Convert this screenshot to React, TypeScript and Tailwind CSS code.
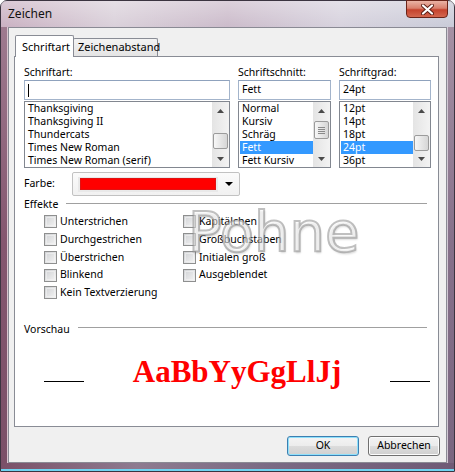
import React from "react";

const UI = "font-['Segoe_UI','Noto_Sans',sans-serif] text-[10.5px] text-black";

function Tri({ dir }: { dir: "up" | "down" }) {
  return (
    <svg width="7" height="4" viewBox="0 0 7 4">
      {dir === "up" ? (
        <polygon points="3.5,0 7,4 0,4" fill="#4a4a4a" />
      ) : (
        <polygon points="0,0 7,0 3.5,4" fill="#4a4a4a" />
      )}
    </svg>
  );
}

function ScrollBar({ thumbClass, grip }: { thumbClass: string; grip?: boolean }) {
  return (
    <div className="relative w-[17px] h-full bg-[linear-gradient(90deg,#e4e4e4,#f3f3f3)] shrink-0">
      <div className="absolute top-[7px] left-0 w-full flex justify-center">
        <Tri dir="up" />
      </div>
      <div
        className={`absolute left-[1px] w-[15px] rounded-[2px] border border-[#9b9b9b] bg-[linear-gradient(90deg,#f7f7f7,#e6e6e6_50%,#d6d6d6)] flex flex-col items-center justify-center gap-[1px] ${thumbClass}`}
      >
        {grip && (
          <>
            <div className="w-[7px] h-px bg-[#8a8a8a]" />
            <div className="w-[7px] h-px bg-[#8a8a8a]" />
            <div className="w-[7px] h-px bg-[#8a8a8a]" />
            <div className="w-[7px] h-px bg-[#8a8a8a]" />
          </>
        )}
      </div>
      <div className="absolute bottom-[6px] left-0 w-full flex justify-center">
        <Tri dir="down" />
      </div>
    </div>
  );
}

function ListBox({
  items,
  selected,
  thumbClass,
  grip,
}: {
  items: string[];
  selected?: number;
  thumbClass: string;
  grip?: boolean;
}) {
  return (
    <div className="mt-[1px] h-[67px] border border-[#828790] bg-white flex">
      <div className="flex-1 overflow-hidden pl-[1px]">
        {items.map((t, i) => (
          <div
            key={t}
            className={`h-[13px] leading-[13px] pl-[2px] whitespace-nowrap ${
              i === selected ? "bg-[#3399ff] text-white" : ""
            }`}
          >
            {t}
          </div>
        ))}
      </div>
      <ScrollBar thumbClass={thumbClass} grip={grip} />
    </div>
  );
}

function TextBox({ value, caret }: { value?: string; caret?: boolean }) {
  return (
    <div className="h-[20px] border border-[#a3b4cb] border-t-[#8fa2bd] bg-white flex items-center pl-[3px]">
      {caret ? <div className="w-px h-[13px] bg-black" /> : <span>{value}</span>}
    </div>
  );
}

function Check({ label }: { label: string }) {
  return (
    <div className="h-[17.75px] flex items-center gap-[3px]">
      <div className="w-[13px] h-[13px] border border-[#8e8f8f] bg-[linear-gradient(135deg,#cfd1d4,#f4f4f4)] p-px">
        <div className="w-full h-full border border-[#f4f4f4]/60" />
      </div>
      <span className="whitespace-nowrap">{label}</span>
    </div>
  );
}

function Button({ label, primary }: { label: string; primary?: boolean }) {
  return (
    <div
      className={`w-[72px] h-[20px] rounded-[3px] border flex items-center justify-center ${
        primary
          ? "border-[#3c7fb1] shadow-[inset_0_0_0_1px_#8fe0fb] bg-[linear-gradient(180deg,#f4f4f4_0%,#ececec_50%,#dcdcdc_50%,#d0d0d0_100%)]"
          : "border-[#707070] shadow-[inset_0_0_0_1px_#fcfcfc] bg-[linear-gradient(180deg,#f2f2f2_0%,#ebebeb_50%,#dddddd_50%,#cfcfcf_100%)]"
      }`}
    >
      {label}
    </div>
  );
}

export default function App() {
  return (
    <div className={`w-[455px] h-[472px] relative overflow-hidden ${UI}`}>
      <div className="absolute inset-0 rounded-t-[7px] border border-[#3b3440] bg-[linear-gradient(90deg,#c7adbf_0%,#d8ced8_25%,#c9b8c8_50%,#d5d0dc_75%,#c6c8d6_100%)] flex flex-col">
        {/* Title bar */}
        <div className="h-[26px] flex items-start relative bg-[linear-gradient(180deg,rgba(255,255,255,0.35),rgba(255,255,255,0.05))]">
          <span className="ml-[7px] mt-[5px] text-[12px] leading-[16px] text-[#111]">Zeichen</span>
          <div className="absolute right-[6px] top-[-1px] w-[42px] h-[18px] rounded-b-[4px] border border-[#6a2419] bg-[linear-gradient(180deg,#eab3a5_0%,#d9806d_45%,#c5432d_55%,#d4674f_100%)] flex items-center justify-center">
            <svg width="13" height="11" viewBox="0 0 13 11">
              <path d="M2 1.5 L11 9.5 M11 1.5 L2 9.5" stroke="#5a1d14" strokeWidth="4" strokeLinecap="round" />
              <path d="M2 1.5 L11 9.5 M11 1.5 L2 9.5" stroke="#ffffff" strokeWidth="2.2" strokeLinecap="round" />
            </svg>
          </div>
        </div>
        {/* Body */}
        <div className="flex h-[436px]">
          <div className="w-[7px] bg-[linear-gradient(180deg,#9e7a8f,#84566f_50%,#7b5068)] border-r border-[#d8c6cf]" />
          <div className="w-[439px] h-[436px] border border-[#8a8a94] bg-[#f0f0f0] flex flex-col">
            {/* Tabs */}
            <div className="pt-[7px] pl-[5px] pr-[7px]">
              <div className="h-[21px] flex items-end pl-[1px]">
                <div className="relative z-10 w-[59px] h-[22px] -mb-px bg-white border border-b-0 border-[#898c95] rounded-t-[2px] flex items-start pt-[3px] pl-[6px] text-[11px]">
                  Schriftart
                </div>
                <div className="-ml-px w-[85px] h-[18px] border border-b-0 border-[#898c95] rounded-t-[2px] bg-[linear-gradient(180deg,#f3f3f3,#e4e4e4)] flex items-center pl-[4px] text-[11px]">
                  Zeichenabstand
                </div>
              </div>
              {/* Panel */}
              <div className="relative h-[371px] border border-[#898c95] bg-white pl-[9px] pr-[6px]">
                {/* watermark */}
                <div className="absolute left-[173px] top-[146px] text-[56px] leading-[58px] font-['DejaVu_Sans',sans-serif] text-white/50 [-webkit-text-stroke:2px_rgba(140,140,140,0.55)] [text-shadow:1px_2px_2px_rgba(0,0,0,0.15)] pointer-events-none z-20">
                  Pohne
                </div>

                {/* Font pickers */}
                <div className="flex gap-[8px] pt-[8px]">
                  <div className="w-[206px] shrink-0">
                    <div className="h-[14px] leading-[14px] mb-[1px]">Schriftart:</div>
                    <TextBox caret />
                    <ListBox
                      items={[
                        "Thanksgiving",
                        "Thanksgiving II",
                        "Thundercats",
                        "Times New Roman",
                        "Times New Roman (serif)",
                      ]}
                      thumbClass="top-[31px] h-[16px]"
                    />
                  </div>
                  <div className="w-[93px] shrink-0">
                    <div className="h-[14px] leading-[14px] mb-[1px]">Schriftschnitt:</div>
                    <TextBox value="Fett" />
                    <ListBox
                      items={["Normal", "Kursiv", "Schräg", "Fett", "Fett Kursiv"]}
                      selected={3}
                      thumbClass="top-[19px] h-[18px]"
                      grip
                    />
                  </div>
                  <div className="w-[92px] shrink-0">
                    <div className="h-[14px] leading-[14px] mb-[1px]">Schriftgrad:</div>
                    <TextBox value="24pt" />
                    <ListBox
                      items={["12pt", "14pt", "18pt", "24pt", "36pt"]}
                      selected={3}
                      thumbClass="top-[33px] h-[16px]"
                    />
                  </div>
                </div>

                {/* Farbe */}
                <div className="mt-[4px] h-[24px] flex items-center">
                  <div className="w-[48px]">Farbe:</div>
                  <div className="w-[168px] h-[24px] rounded-[2px] border border-[#c2c2c2] bg-[linear-gradient(180deg,#fbfbfb,#f1f1f1)] flex items-center pl-[5px] pr-[6px]">
                    <div className="w-[140px] h-[15px] bg-[#e9e9e9] flex items-center justify-center">
                      <div className="w-[136px] h-[12px] bg-[#ff0000] border border-[#b03030]/40" />
                    </div>
                    <div className="flex-1 flex justify-end">
                      <svg width="8" height="4" viewBox="0 0 8 4">
                        <polygon points="0,0 8,0 4,4" fill="#000" />
                      </svg>
                    </div>
                  </div>
                </div>

                {/* Effekte */}
                <div className="mt-[1px] h-[14px] flex items-center gap-[8px] mr-[5px]">
                  <span className="leading-[14px]">Effekte</span>
                  <div className="flex-1 h-px bg-[#a0a0a0] -mt-[1px]" />
                </div>
                <div className="mt-[2px] flex">
                  <div className="ml-[20px] w-[139px] flex flex-col">
                    <Check label="Unterstrichen" />
                    <Check label="Durchgestrichen" />
                    <Check label="Überstrichen" />
                    <Check label="Blinkend" />
                    <Check label="Kein Textverzierung" />
                  </div>
                  <div className="flex flex-col">
                    <Check label="Kapitälchen" />
                    <Check label="Großbuchstaben" />
                    <Check label="Initialen groß" />
                    <Check label="Ausgeblendet" />
                  </div>
                </div>

                {/* Vorschau */}
                <div className="mt-[20px] h-[14px] flex items-center gap-[8px] mr-[5px]">
                  <span className="leading-[14px]">Vorschau</span>
                  <div className="flex-1 h-px bg-[#a0a0a0] -mt-[2px]" />
                </div>
                <div className="mt-[20px] ml-[20px] w-[386px] h-[31px] flex items-start">
                  <div className="mt-[25px] w-[40px] h-px bg-black" />
                  <div className="flex-1 text-center text-[31px] leading-[31px] font-bold text-[#ff0000] font-['Liberation_Serif','Times_New_Roman',serif]">
                    AaBbYyGgLlJj
                  </div>
                  <div className="mt-[25px] w-[40px] h-px bg-black" />
                </div>
              </div>
            </div>
            {/* Buttons */}
            <div className="mt-[9px] flex justify-end gap-[9px] pr-[6px]">
              <Button label="OK" primary />
              <Button label="Abbrechen" />
            </div>
          </div>
          <div className="w-[7px] bg-[linear-gradient(180deg,#a591a4,#86708a_50%,#7a6680)] border-l border-[#d2c9d4]" />
        </div>
        {/* bottom frame */}
        <div className="flex-1 bg-[linear-gradient(90deg,#7a5068,#8e7b90_30%,#7a6a84_60%,#6f5a76)] border-b-2 border-[#6fd3f0]" />
      </div>
    </div>
  );
}
